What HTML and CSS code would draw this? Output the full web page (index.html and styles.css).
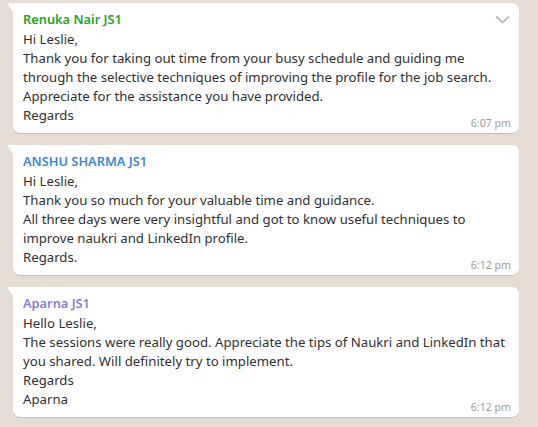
FILE: index.html
```html
<!DOCTYPE html>
<html lang="en">
<head>
<meta charset="utf-8">
<title>Chat</title>
<link rel="stylesheet" href="styles.css">
</head>
<body>
<div class="chat">
  <div class="bubble">
    <svg class="menu" width="15" height="9" viewBox="0 0 15 9"><polyline points="1,1.5 7.5,7.5 14,1.5" fill="none" stroke="#b8b8b8" stroke-width="1.8"/></svg>
    <div class="name green">Renuka Nair JS1</div>
    <div class="text">Hi Leslie,<br>Thank you for taking out time from your busy schedule and guiding me<br>through the selective techniques of improving the profile for the job search.<br>Appreciate for the assistance you have provided.<br>Regards</div>
    <div class="time">6:07 pm</div>
  </div>
  <div class="bubble">
    <div class="name blue">ANSHU SHARMA JS1</div>
    <div class="text">Hi Leslie,<br>Thank you so much for your valuable time and guidance.<br>All three days were very insightful and got to know useful techniques to<br>improve naukri and LinkedIn profile.<br>Regards.</div>
    <div class="time">6:12 pm</div>
  </div>
  <div class="bubble">
    <div class="name purple">Aparna JS1</div>
    <div class="text">Hello Leslie,<br>The sessions were really good. Appreciate the tips of Naukri and LinkedIn that<br>you shared. Will definitely try to implement.<br>Regards<br>Aparna</div>
    <div class="time">6:12 pm</div>
  </div>
</div>
</body>
</html>
```

FILE: styles.css
```css
html, body {
  margin: 0;
  padding: 0;
}
body {
  background: #e5ddd5;
  font-family: "Noto Sans", "Open Sans", sans-serif;
  width: 538px;
  height: 427px;
  overflow: hidden;
}
.chat {
  display: flex;
  flex-direction: column;
  gap: 12px;
  padding: 3px 19px 0 13px;
}
.bubble {
  position: relative;
  background: #ffffff;
  border-radius: 0 7px 7px 7px;
  box-shadow: 0 1px 0.5px rgba(0, 0, 0, 0.13);
  padding: 6px 8px 2px 10px;
  display: flex;
  flex-direction: column;
}
.bubble::before {
  content: "";
  position: absolute;
  top: 0;
  left: -6px;
  width: 0;
  height: 0;
  border-top: 9px solid #ffffff;
  border-left: 6px solid transparent;
}
.menu {
  position: absolute;
  top: 12px;
  right: 9px;
}
.name {
  font-size: 12.8px;
  font-weight: 600;
  line-height: 21px;
  white-space: nowrap;
}
.green { color: #25a32a; }
.blue { color: #3a87d6; }
.purple { color: #8b7add; }
.text {
  font-size: 13.2px;
  line-height: 19px;
  color: #303030;
  white-space: nowrap;
}
.time {
  align-self: flex-end;
  margin-top: -9px;
  font-size: 10.6px;
  line-height: 15px;
  color: #9a9a9a;
}
```
